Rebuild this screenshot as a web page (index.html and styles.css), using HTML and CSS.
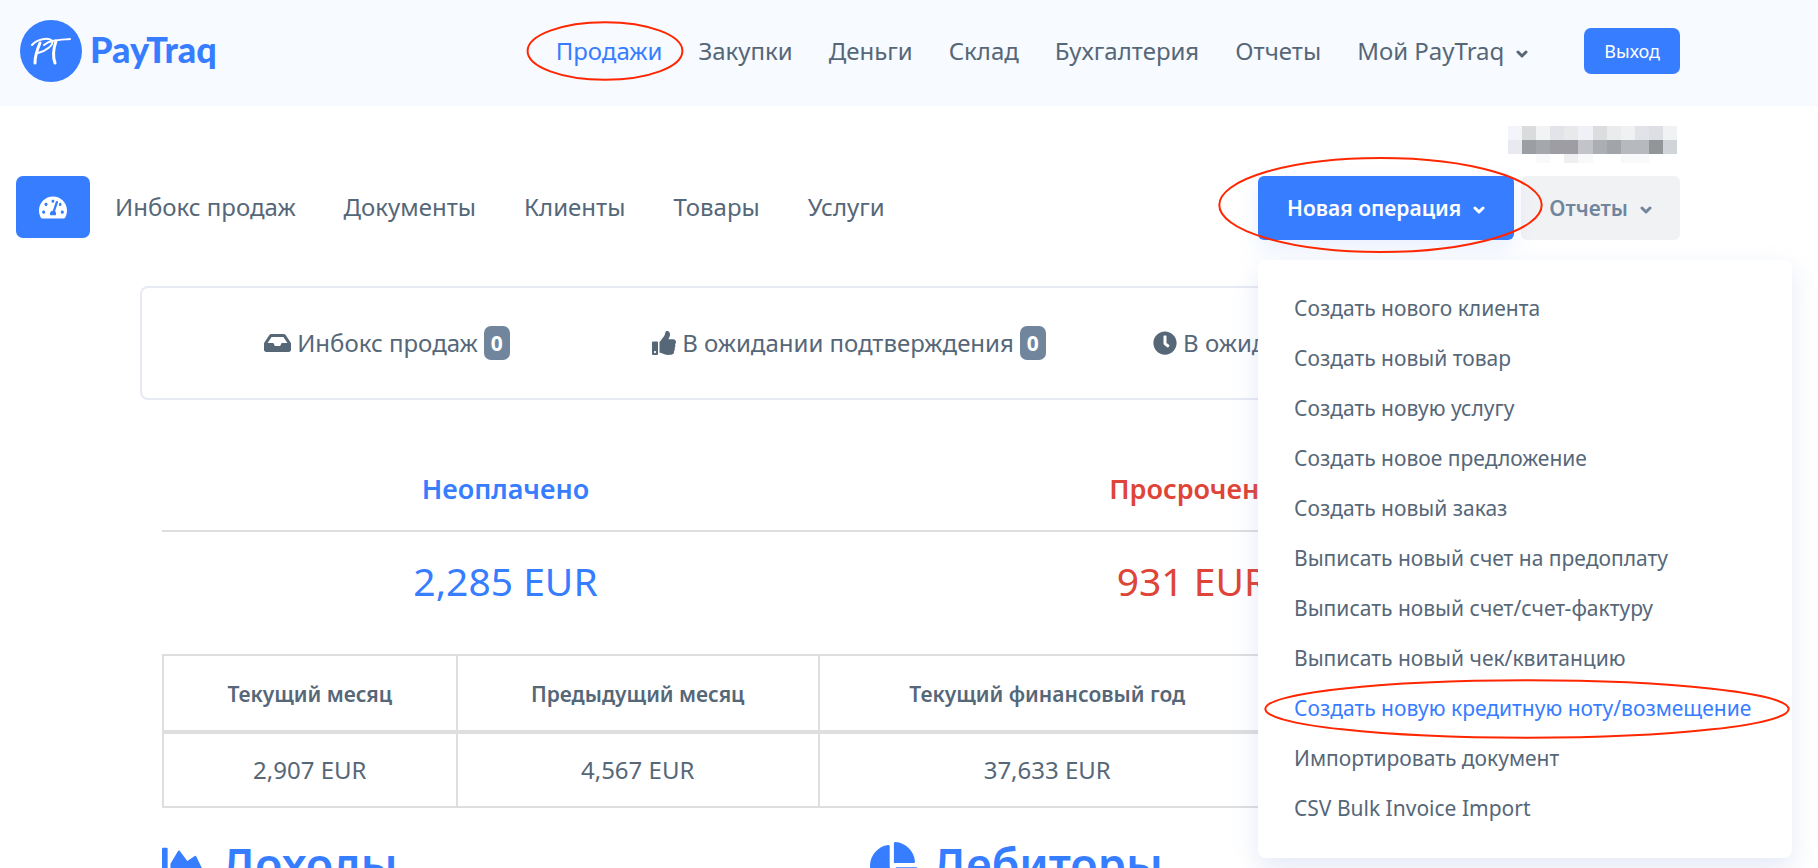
FILE: index.html
```html
<!DOCTYPE html>
<html lang="ru">
<head>
<meta charset="utf-8">
<title>PayTraq</title>
<link rel="stylesheet" href="styles.css">
</head>
<body>
<svg class="sprite" aria-hidden="true">
  <symbol id="chevron" viewBox="0 0 12 8"><path d="M2 2l4 4 4-4" fill="none" stroke="currentColor" stroke-width="3" stroke-linecap="round" stroke-linejoin="round"/></symbol>
</svg>
<header class="header">
  <a class="logo" href="#">
    <svg class="logo-mark" viewBox="0 0 62 62" aria-hidden="true">
      <circle cx="31" cy="31" r="31" fill="#377dff"/>
      <g fill="none" stroke="#fff" stroke-linecap="round" stroke-linejoin="round">
        <path d="M20 23c-3 7-5 13-5 20" stroke-width="3"/>
        <path d="M12 25c5-6 17-8 20-4 2 4-6 10-14 12" stroke-width="2"/>
        <path d="M24 25c6-5 15-5 26-6" stroke-width="2"/>
        <path d="M36 21c-2 6-4 14-1 22" stroke-width="3"/>
      </g>
    </svg>
    <span class="logo-text">PayTraq</span>
  </a>
  <nav class="main-nav">
    <a class="active marked" href="#">Продажи<svg class="ring ring-nav" aria-hidden="true"><ellipse cx="50%" cy="50%" rx="49%" ry="48%"/></svg></a>
    <a href="#">Закупки</a>
    <a href="#">Деньги</a>
    <a href="#">Склад</a>
    <a href="#">Бухгалтерия</a>
    <a href="#">Отчеты</a>
    <a href="#">Мой PayTraq<svg class="chevron"><use href="#chevron"/></svg></a>
  </nav>
  <button class="logout" type="button">Выход</button>
</header>

<main class="page">
  <div class="account">
    <svg class="mosaic" viewBox="0 0 12 37" preserveAspectRatio="none" shape-rendering="crispEdges" role="img" aria-label="Аккаунт">
      <g>
        <path fill="#f4f5fa" d="M0 0h1v14H0z"/><path fill="#dadbdd" d="M1 0h1v14H1z"/><path fill="#f2f3f5" d="M2 0h1v14H2z"/><path fill="#e3e4e9" d="M3 0h1v14H3z"/><path fill="#e8e9eb" d="M4 0h1v14H4z"/><path fill="#f0f1f6" d="M5 0h1v14H5z"/><path fill="#dcddde" d="M6 0h1v14H6z"/><path fill="#eaebec" d="M7 0h1v14H7z"/><path fill="#f0f1f3" d="M8 0h1v14H8z"/><path fill="#e2e3e8" d="M9 0h1v14H9z"/><path fill="#dedfe5" d="M10 0h1v14h-1z"/><path fill="#f1f2f4" d="M11 0h1v14h-1z"/>
        <path fill="#e9eaef" d="M0 14h1v14H0z"/><path fill="#9b9ea2" d="M1 14h1v14H1z"/><path fill="#a4a7ab" d="M2 14h1v14H2z"/><path fill="#9d9da3" d="M3 14h2v14H3z"/><path fill="#c3c4c9" d="M5 14h1v14H5z"/><path fill="#abaeb3" d="M6 14h1v14H6z"/><path fill="#a1a4a8" d="M7 14h1v14H7z"/><path fill="#b6babf" d="M8 14h2v14H8z"/><path fill="#929699" d="M10 14h1v14h-1z"/><path fill="#d1d5d9" d="M11 14h1v14h-1z"/>
        <path fill="#f8f9fb" d="M2 28h1v9H2z"/><path fill="#efeff1" d="M4 28h1v9H4z"/><path fill="#f8f9fb" d="M5 28h1v9H5zM8 28h2v9H8z"/>
      </g>
    </svg>
  </div>

  <div class="toolbar">
    <button class="dash" type="button" aria-label="Панель">
      <svg viewBox="0 0 576 512"><path fill="currentColor" d="M288 32C128.94 32 0 160.94 0 320c0 52.8 14.25 102.26 39.06 144.8 5.61 9.62 16.3 15.2 27.44 15.2h443c11.14 0 21.83-5.58 27.44-15.2C561.75 422.26 576 372.8 576 320c0-159.06-128.94-288-288-288zm0 64c14.71 0 26.58 10.13 30.32 23.65-1.11 2.26-2.64 4.23-3.45 6.67l-9.22 27.67c-5.13 3.49-10.97 6.01-17.64 6.01-17.67 0-32-14.33-32-32S270.33 96 288 96zM96 384c-17.67 0-32-14.33-32-32s14.33-32 32-32 32 14.33 32 32-14.33 32-32 32zm48-160c-17.67 0-32-14.33-32-32s14.33-32 32-32 32 14.33 32 32-14.33 32-32 32zm246.77-72.41l-61.33 184C343.13 347.33 352 364.54 352 384c0 11.72-3.38 22.55-8.88 32H232.88c-5.5-9.45-8.88-20.28-8.88-32 0-33.94 26.5-61.43 59.9-63.59l61.34-184.01c4.17-12.56 17.73-19.45 30.36-15.17 12.57 4.19 19.35 17.79 15.17 30.36zm14.66 57.2l15.52-46.55c3.47-1.29 7.13-2.23 11.05-2.23 17.67 0 32 14.33 32 32s-14.33 32-32 32c-11.38-.01-20.89-6.28-26.57-15.22zM480 384c-17.67 0-32-14.33-32-32s14.33-32 32-32 32 14.33 32 32-14.33 32-32 32z"/></svg>
    </button>
    <nav class="sub-nav">
      <a href="#">Инбокс продаж</a>
      <a href="#">Документы</a>
      <a href="#">Клиенты</a>
      <a href="#">Товары</a>
      <a href="#">Услуги</a>
    </nav>
    <div class="actions">
      <div class="dropdown">
        <button class="btn btn-primary" type="button" aria-expanded="true">Новая операция<svg class="chevron"><use href="#chevron"/></svg></button>
        <svg class="ring ring-button" aria-hidden="true"><ellipse cx="50%" cy="50%" rx="49%" ry="49%"/></svg>
        <div class="menu">
          <a href="#">Создать нового клиента</a>
          <a href="#">Создать новый товар</a>
          <a href="#">Создать новую услугу</a>
          <a href="#">Создать новое предложение</a>
          <a href="#">Создать новый заказ</a>
          <a href="#">Выписать новый счет на предоплату</a>
          <a href="#">Выписать новый счет/счет-фактуру</a>
          <a href="#">Выписать новый чек/квитанцию</a>
          <a class="active marked" href="#">Создать новую кредитную ноту/возмещение<svg class="ring ring-menu" aria-hidden="true"><ellipse cx="50%" cy="50%" rx="49%" ry="48%"/></svg></a>
          <a href="#">Импортировать документ</a>
          <a href="#">CSV Bulk Invoice Import</a>
        </div>
      </div>
      <button class="btn btn-soft" type="button">Отчеты<svg class="chevron"><use href="#chevron"/></svg></button>
    </div>
  </div>

  <div class="content">
    <section class="card">
      <a href="#"><svg class="ico-wide" viewBox="0 0 576 512"><path fill="currentColor" d="M567.938 243.908L462.25 85.374A48.003 48.003 0 0 0 422.311 64H153.689a48 48 0 0 0-39.938 21.374L8.062 243.908A47.994 47.994 0 0 0 0 270.533V400c0 26.51 21.49 48 48 48h480c26.51 0 48-21.49 48-48V270.533a47.994 47.994 0 0 0-8.062-26.625zM162.252 128h251.497l85.333 128H376l-32 64H232l-32-64H76.918l85.334-128z"/></svg>Инбокс продаж<span class="badge">0</span></a>
      <a href="#"><svg class="ico" viewBox="0 0 512 512"><path fill="currentColor" d="M104 224H24c-13.255 0-24 10.745-24 24v240c0 13.255 10.745 24 24 24h80c13.255 0 24-10.745 24-24V248c0-13.255-10.745-24-24-24zM64 472c-13.255 0-24-10.745-24-24s10.745-24 24-24 24 10.745 24 24-10.745 24-24 24zM384 81.452c0 42.416-25.97 66.208-33.277 94.548h101.723c33.397 0 59.397 27.746 59.553 58.098.084 17.938-7.546 37.249-19.439 49.197l-.11.11c9.836 23.337 8.237 56.037-9.308 79.469 8.681 25.895-.069 57.704-16.382 74.757 4.298 17.598 2.244 32.575-6.148 44.632C440.202 511.587 389.616 512 346.839 512l-2.845-.001c-48.287-.017-87.806-17.598-119.56-31.725-15.957-7.099-36.821-15.887-52.651-16.178-6.54-.12-11.783-5.457-11.783-11.998v-213.77c0-3.2 1.282-6.271 3.558-8.521 39.614-39.144 56.648-80.587 89.117-113.111 14.804-14.832 20.188-37.236 25.393-58.902C282.515 39.293 291.817 0 312 0c24 0 72 8 72 81.452z"/></svg>В ожидании подтверждения<span class="badge">0</span></a>
      <a href="#"><svg class="ico" viewBox="0 0 512 512"><path fill="currentColor" d="M256,8C119,8,8,119,8,256S119,504,256,504,504,393,504,256,393,8,256,8Zm92.49,313h0l-20,25a16,16,0,0,1-22.49,2.5h0l-67-49.72a40,40,0,0,1-15-31.23V112a16,16,0,0,1,16-16h32a16,16,0,0,1,16,16V256l58,42.5A16,16,0,0,1,348.49,321Z"/></svg>В ожидании доставки<span class="badge">0</span></a>
    </section>

    <div class="totals-wrap">
      <table class="totals">
        <thead><tr><th class="blue">Неоплачено</th><th class="red">Просрочено</th></tr></thead>
        <tbody><tr><td class="blue">2,285 EUR</td><td class="red">931 EUR</td></tr></tbody>
      </table>

      <table class="periods">
        <colgroup><col class="c1"><col class="c2"><col class="c3"><col></colgroup>
        <thead><tr><th>Текущий месяц</th><th>Предыдущий месяц</th><th>Текущий финансовый год</th><th></th></tr></thead>
        <tbody><tr><td>2,907 EUR</td><td>4,567 EUR</td><td>37,633 EUR</td><td></td></tr></tbody>
      </table>

      <div class="charts">
        <h2><svg viewBox="0 0 512 512"><path fill="currentColor" d="M500 384c6.600 0 12 5.400 12 12v40c0 6.600-5.400 12-12 12H12c-6.600 0-12-5.400-12-12V76c0-6.600 5.400-12 12-12h40c6.600 0 12 5.400 12 12v308h436zM372.700 159.500L288 216l-85.300-113.700c-5.100-6.800-15.500-6.300-19.900 1L96 248v104h384l-89.900-187.800c-3.200-6.500-11.400-8.700-17.400-4.700z"/></svg>Доходы</h2>
        <h2><svg viewBox="0 0 544 512"><path fill="currentColor" d="M527.790 288H290.500l158.030 158.030c6.040 6.040 15.980 6.530 22.190.68 38.700-36.460 65.320-85.610 73.130-140.860 1.340-9.460-6.510-17.850-16.060-17.850zm-15.830-64.800C503.720 103.740 408.260 8.280 288.800.04 279.680-.59 272 7.100 272 16.240V240h223.770c9.140 0 16.820-7.680 16.190-16.800zM224 288V50.710c0-9.550-8.390-17.400-17.840-16.060C86.990 51.490-4.100 155.600.14 280.370 4.500 408.510 114.830 513.130 243.030 511.980c50.400-.45 96.970-17.390 134.970-45.710 7.900-5.600 8.420-17.230 1.570-24.080L224 288z"/></svg>Дебиторы</h2>
      </div>
    </div>
  </div>
</main>
</body>
</html>
```
FILE: styles.css
```css
* { box-sizing: border-box; }
body {
  margin: 0;
  height: 100vh;
  overflow: hidden;
  background: #fff;
  color: #566778;
  font: 24px/36px "Noto Sans", "Open Sans", sans-serif;
}
a { color: inherit; text-decoration: none; white-space: nowrap; }
button { font-family: inherit; border: 0; cursor: pointer; white-space: nowrap; }
.sprite { position: absolute; width: 0; height: 0; }
.chevron { width: 12px; height: 8px; margin-left: 12px; vertical-align: 2px; }
.active, .blue { color: #377dff; }
.red { color: #de4437; }

.header {
  display: flex;
  align-items: center;
  height: 106px;
  padding: 0 138px 4px 20px;
  background: #f7faff;
}
.logo { display: flex; align-items: center; gap: 8px; color: #377dff; }
.logo-mark { width: 62px; height: 62px; }
.logo-text { padding-bottom: 4px; font: 900 36px/40px Lato, sans-serif; }
.main-nav { display: flex; gap: 36px; margin-left: auto; }
.logout {
  height: 46px;
  margin-left: 56px;
  padding: 0 20px;
  border-radius: 7px;
  background: #377dff;
  color: #fff;
  font-size: 18px;
}

.marked { position: relative; }
.ring { position: absolute; overflow: visible; pointer-events: none; z-index: 3; }
.ring ellipse { fill: none; stroke: #ff2600; stroke-width: 2; }
.ring-nav { left: -30px; top: -12px; width: 158px; height: 60px; }
.ring-button { left: -42px; top: -19px; width: 329px; height: 96px; }
.ring-menu { left: 2px; top: -4px; width: 534px; height: 60px; }

.page { padding: 20px 138px 0 16px; }
.account { display: flex; justify-content: flex-end; height: 50px; padding-right: 3px; }
.mosaic { width: 169px; height: 37px; }

.toolbar { display: flex; align-items: flex-start; }
.dash {
  display: grid;
  place-items: center;
  width: 74px;
  height: 62px;
  border-radius: 7px;
  background: #377dff;
  color: #fff;
}
.dash svg { width: 28px; height: 25px; }
.sub-nav { display: flex; gap: 48px; margin-left: 25px; padding-top: 13px; }
.actions { display: flex; gap: 7px; margin-left: auto; }
.dropdown { position: relative; }
.btn {
  height: 64px;
  padding: 0 28px;
  border-radius: 6px;
  font-size: 21px;
  font-weight: 600;
}
.btn-primary { padding: 0 29px; background: #377dff; color: #fff; box-shadow: 0 8px 22px rgba(55, 125, 255, .12); }
.btn-soft { background: #f1f2f4; color: #71869d; }
.menu {
  position: absolute;
  left: 0;
  top: 84px;
  z-index: 2;
  min-width: 534px;
  padding: 23px 0 25px;
  border-radius: 8px;
  background: #fff;
  box-shadow: 0 10px 26px rgba(120, 145, 210, .2);
  font-size: 21px;
}
.menu a { display: block; padding: 7px 36px; }

.content { margin: 46px 122px 0 124px; }
.card {
  display: grid;
  grid-template-columns: repeat(3, 1fr);
  padding: 36px 14px;
  border: 2px solid #e7eaf3;
  border-radius: 8px;
}
.card a { display: flex; align-items: center; justify-content: center; gap: 6px; line-height: 38px; }
.ico { width: 24px; height: 24px; }
.ico-wide { width: 27px; height: 24px; }
.badge {
  padding: 0 7px;
  border-radius: 7px;
  background: #71869d;
  color: #fff;
  font-size: 21px;
  font-weight: 700;
  line-height: 34px;
}

.totals-wrap { padding: 66px 22px 0; }
table { width: 100%; border-collapse: collapse; table-layout: fixed; text-align: center; }
.totals th { padding: 5px 0 23px; border-bottom: 2px solid #dedede; font-size: 27px; font-weight: 600; }
.totals td { padding: 21px 0 23px; font-size: 39px; line-height: 56px; }
.periods { margin-top: 22px; }
.periods th, .periods td { border: 2px solid #dedede; padding: 18px 0; }
.periods th { border-bottom-width: 4px; padding: 20px 0 18px; font-size: 21px; font-weight: 600; }
.periods .c1 { width: 21.4%; }
.periods .c2 { width: 26.4%; }
.periods .c3 { width: 33.3%; }

.charts { display: grid; grid-template-columns: 1fr 1fr; gap: 42px; margin-top: 20px; }
.charts h2 {
  display: flex;
  align-items: center;
  gap: 14px;
  margin: 0;
  color: #377dff;
  font-size: 45px;
  font-weight: 600;
  line-height: 72px;
}
.charts svg { height: 45px; }
```
